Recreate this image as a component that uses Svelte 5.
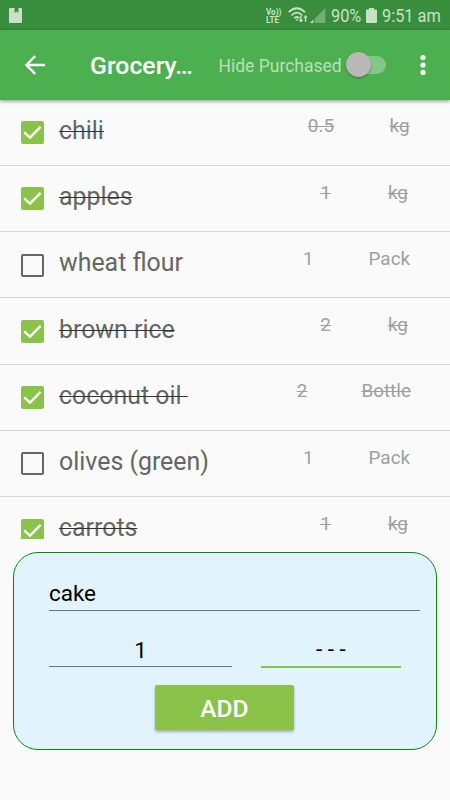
<script>
  let items = $state([
    { name: 'chili', qty: '0.5', unit: 'kg', purchased: true },
    { name: 'apples', qty: '1', unit: 'kg', purchased: true },
    { name: 'wheat flour', qty: '1', unit: 'Pack', purchased: false },
    { name: 'brown rice', qty: '2', unit: 'kg', purchased: true },
    { name: 'coconut oil ', qty: '2', unit: 'Bottle', purchased: true },
    { name: 'olives (green)', qty: '1', unit: 'Pack', purchased: false },
    { name: 'carrots', qty: '1', unit: 'kg', purchased: true },
  ]);

  let hidePurchased = $state(false);
  let name = $state('cake');
  let qty = $state('1');
  let unit = $state('- - -');

  let visible = $derived(hidePurchased ? items.filter(i => !i.purchased) : items);

  function add() {
    if (!name) return;
    items.push({ name, qty, unit, purchased: false });
    name = '';
  }
</script>

<div class="screen">
  <div class="status">
    <svg class="note" width="13" height="15" viewBox="0 0 13 15">
      <path d="M1 0H5.6V5L7.6 3.5L9.4 5V0H12Q13 0 13 1V14Q13 15 12 15H1Q0 15 0 14V1Q0 0 1 0Z" />
    </svg>
    <div class="volte"><span>Vo))</span><span>LTE</span></div>
    <svg class="wifi" width="20" height="17" viewBox="0 0 20 17">
      <g fill="none" stroke="#c8e1c9" stroke-width="1.8">
        <path d="M.7 5.2Q8.8 -2.8 17 5.2" />
        <path d="M3.5 8.3Q8.8 3 14.2 8.3" />
        <path d="M6.2 11.2Q8.8 8.7 11.4 11.2" />
      </g>
      <path d="M7.4 12.3h2.8l-1.4 1.8zM12.2 9h1.4v3.8h1.7l-2.4 2.7-2.4-2.7h1.7zM16.8 14.7h1.4v-4h1.4l-2.1-2.6-2.1 2.6h1.4z" />
    </svg>
    <svg class="signal" width="16" height="15" viewBox="0 0 16 15">
      <path d="M15.3 0V15H.6Z" opacity=".4" />
      <path class="gap" d="M4.6 10.2V15H0V15Z" />
      <path d="M3.4 11.4V15H0Z" />
    </svg>
    <span class="percent">90%</span>
    <svg class="battery" width="11" height="15" viewBox="0 0 11 15">
      <path d="M3 0H8V1.6H10Q11 1.6 11 2.6V14Q11 15 10 15H1Q0 15 0 14V2.6Q0 1.6 1 1.6H3Z" />
    </svg>
    <span class="clock">9:51 am</span>
  </div>

  <header>
    <svg class="back" width="20" height="20" viewBox="0 0 20 20" fill="none" stroke="#fff" stroke-width="2.4">
      <path d="M20 10H1.8M10.2 1L1.5 10L10.2 19" />
    </svg>
    <h1>Grocery…</h1>
    <span class="label">Hide Purchased</span>
    <button class="switch" class:on={hidePurchased} onclick={() => hidePurchased = !hidePurchased} aria-label="Hide Purchased">
      <span class="thumb"></span>
    </button>
    <svg class="more" width="6" height="20" viewBox="0 0 6 20" fill="#fff">
      <circle cx="3" cy="2.6" r="2.6" />
      <circle cx="3" cy="10" r="2.6" />
      <circle cx="3" cy="17.4" r="2.6" />
    </svg>
  </header>

  <ul>
    {#each visible as item}
      <li class:done={item.purchased}>
        <button class="check" onclick={() => item.purchased = !item.purchased} aria-label={item.name}>
          {#if item.purchased}
            <svg width="23" height="23" viewBox="0 0 23 23">
              <path d="M3.2 11.4L9 16.6L19.6 5.8" fill="none" stroke="#fff" stroke-width="2.4" />
            </svg>
          {/if}
        </button>
        <span class="name"><span>{item.name}</span></span>
        <div class="amount">
          <span class="qty"><span>{item.qty}</span></span>
          <span class="unit"><span>{item.unit}</span></span>
        </div>
      </li>
    {/each}
  </ul>

  <div class="form">
    <input class="item-name" bind:value={name} />
    <div class="fields">
      <input class="item-qty" bind:value={qty} />
      <input class="item-unit" bind:value={unit} />
    </div>
    <button class="add" onclick={add}>ADD</button>
  </div>
</div>

<style>
  :global(body) { background: #fafafa; }
  .screen { width: 450px; height: 800px; overflow: hidden; background: #fafafa; font-family: Roboto, sans-serif; }
  button { border: 0; padding: 0; font-family: inherit; }
  svg { display: block; flex-shrink: 0; }

  .status { display: flex; align-items: center; height: 30px; box-sizing: border-box; padding: 1px 10px 0 9px; background: #388e3c; color: #c8e1c9; font-size: 19px; white-space: nowrap; }
  .status svg { fill: #c8e1c9; }
  .status svg .gap { fill: #388e3c; }
  .volte { display: flex; flex-direction: column; width: 16px; margin-left: auto; font-size: 9.4px; line-height: 8px; font-weight: 700; transform: scaleX(0.86); transform-origin: left; }
  .volte span { height: 8px; }
  .wifi { margin-left: 6px; }
  .signal { margin-left: 2px; }
  .percent, .clock { transform: scaleX(0.86); transform-origin: left; }
  .percent { width: 30px; margin-left: 5px; }
  .battery { margin-left: 5px; }
  .clock { width: 58px; margin-left: 5px; }

  header { position: relative; display: flex; align-items: center; height: 69.5px; box-sizing: border-box; padding: 0 24.5px 0 25px; background: #4caf50; box-shadow: 0 1px 4px rgba(0, 0, 0, 0.45); color: #fff; white-space: nowrap; }
  h1 { width: 102px; margin: 2px 0 0 45px; font-size: 24.8px; font-weight: 500; }
  .label { width: 123px; margin: 2px 0 0 26.5px; color: #b9e0bb; font-size: 17.5px; }
  .switch { position: relative; display: flex; align-items: center; width: 40px; height: 26px; margin-left: 4px; background: none; }
  .switch::before { content: ''; position: absolute; left: 6px; right: 0; top: 4px; height: 18px; border-radius: 9px; background: #82c785; }
  .thumb { position: relative; width: 25px; height: 25px; border-radius: 50%; background: #b9b9b9; box-shadow: 0 1px 2px rgba(0, 0, 0, 0.35); }
  .on .thumb { margin-left: 15px; }
  .more { margin-left: auto; }

  ul { height: 439.5px; margin: 0; padding: 0; overflow: hidden; list-style: none; }
  li { display: flex; align-items: flex-start; height: 66.25px; box-sizing: border-box; border-bottom: 1px solid #d5d5d5; padding-left: 21px; }
  .check { width: 23px; height: 23px; margin-top: 21.5px; box-sizing: border-box; border: 2px solid #666; border-radius: 2px; background: none; flex-shrink: 0; }
  .done .check { border: 0; background: #8bc34a; }
  .name { flex: 1; min-width: 0; margin: 18.4px 0 0 15px; color: #666; font-size: 24.9px; line-height: 26px; white-space: pre; }
  .done .name span { text-decoration: line-through #333 1.3px; }
  .amount { display: flex; width: 230px; flex-shrink: 0; margin-top: 14.9px; color: #9f9f9f; font-size: 18.9px; line-height: 24px; }
  .qty { flex: 8 0 auto; padding-left: 20px; text-align: right; }
  .unit { flex: 2 0 auto; padding: 0 32px 0 47px; text-align: center; }
  .done .amount span span { text-decoration: line-through 1px; }

  .form { display: flex; flex-direction: column; height: 198px; box-sizing: border-box; margin: 12.5px 13px 0 12.5px; padding: 21px 16px 0 35.4px; border: 1px solid #0b850f; border-radius: 25px; background: #e1f4fd; }
  input { box-sizing: border-box; min-width: 0; height: 37px; border: 0; border-bottom: 1.4px solid #687479; padding: 4px 0 0; outline: none; background: none; color: #000; font: 22.5px Roboto, sans-serif; }
  .item-name { width: 371px; padding-top: 2px; }
  .fields { display: flex; gap: 28.5px; margin-top: 19px; }
  .item-qty { width: 183.5px; text-align: center; }
  .item-unit { width: 140px; height: 38.5px; border-bottom: 2px solid #8bc34a; padding-top: 3px; text-align: center; }
  .add { width: 139px; height: 45px; margin: 16.5px 0 0 106px; border-radius: 2px; padding-top: 2px; background: #8bc34a; box-shadow: 0 2px 3px rgba(0, 0, 0, 0.3); color: #fff; font-size: 24.5px; font-weight: 500; }
</style>
